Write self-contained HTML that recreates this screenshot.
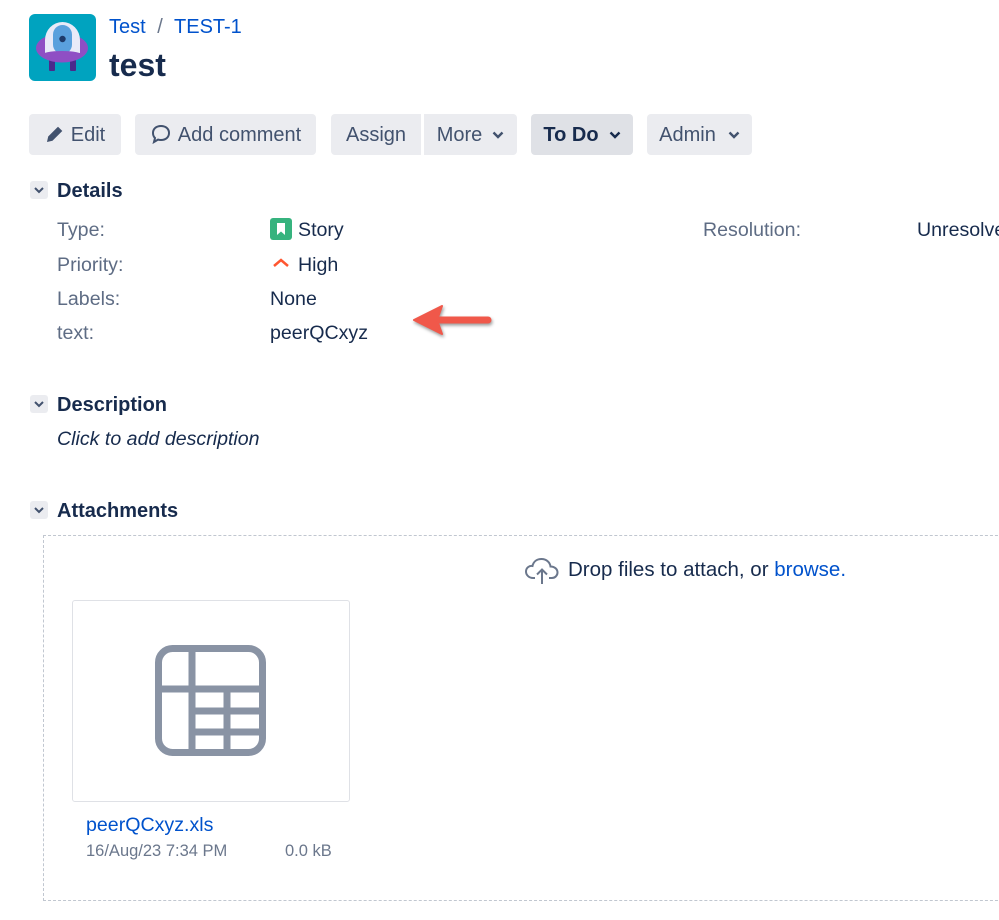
<!DOCTYPE html>
<html><head><meta charset="utf-8"><style>
*{margin:0;padding:0;box-sizing:border-box}
body{width:999px;height:920px;background:#fff;font-family:"Liberation Sans",sans-serif;color:#172b4d;position:relative;overflow:hidden}
.a{position:absolute;white-space:nowrap}
.btn{position:absolute;top:114px;height:41px;background:#ebecf0;border-radius:4px;font-size:20px;line-height:42px;color:#42526e;text-align:center}
.lbl{position:absolute;left:57px;font-size:19.6px;color:#5e6c84;line-height:22px}
.val{position:absolute;font-size:19.6px;color:#172b4d;line-height:22px}
.hd{position:absolute;left:30px;font-size:20px;font-weight:bold;line-height:22px}
.chev{position:absolute;left:30px;width:18px;height:18px;background:#ebecf0;border-radius:3px}
.dd{display:inline-block;vertical-align:2px;margin-left:10px}
</style></head><body>
<svg class="a" style="left:29px;top:14px" width="67" height="67" viewBox="0 0 67 67">
<rect width="67" height="67" rx="6" fill="#00a3bf"/>
<rect x="20" y="44" width="6" height="13" rx="1" fill="#4a2a8c"/><rect x="41" y="44" width="6" height="13" rx="1" fill="#4a2a8c"/>
<ellipse cx="33" cy="34" rx="26" ry="14.5" fill="#8f4fc4"/>
<path d="M16 39 L16 26 A17.5 18 0 0 1 51 26 L51 39 Z" fill="#e8eaf8"/>
<rect x="24" y="11" width="19" height="29" rx="9.5" fill="#5aa0dd"/>
<circle cx="33.5" cy="25" r="3.2" fill="#1e3a6a"/>
<ellipse cx="33" cy="41" rx="20" ry="4" fill="#8f4fc4"/>
</svg>
<div class="a" style="left:109px;top:16px;font-size:20px;color:#0052cc">Test <span style="color:#6b778c;margin:0 6px">/</span> TEST-1</div>
<div class="a" style="left:109px;top:47px;font-size:32px;font-weight:bold;color:#172b4d">test</div>

<div class="btn" style="left:29px;width:92px"><svg width="20" height="20" viewBox="0 0 20 20" style="vertical-align:-3px;margin-right:6px"><path d="M2 18 L3.2 12.5 L13 2.7 L17.3 7 L7.5 16.8 Z" fill="#42526e"/></svg>Edit</div>
<div class="btn" style="left:135px;width:181px"><svg width="22" height="20" viewBox="0 0 22 20" style="vertical-align:-3px;margin-right:6px"><path d="M11 2 C16 2 19 5 19 9 C19 13 16 16 11 16 C10 16 9 16 8 15.6 L4 18 L5 14 C3.5 12.6 3 11 3 9 C3 5 6 2 11 2 Z" fill="none" stroke="#42526e" stroke-width="2"/></svg>Add comment</div>
<div class="btn" style="left:331px;width:90px;border-radius:4px 0 0 4px">Assign</div>
<div class="btn" style="left:424px;width:93px;border-radius:0 4px 4px 0">More<svg class="dd" width="12" height="8"><path d="M1.5 1.5 L6 6 L10.5 1.5" stroke="#42526e" stroke-width="2.4" fill="none"/></svg></div>
<div class="btn" style="left:531px;width:102px;background:#dfe1e6;color:#172b4d;font-weight:bold">To Do<svg class="dd" width="12" height="8"><path d="M1.5 1.5 L6 6 L10.5 1.5" stroke="#172b4d" stroke-width="2.4" fill="none"/></svg></div>
<div class="btn" style="left:647px;width:105px">Admin<svg class="dd" width="12" height="8" style="margin-left:12px"><path d="M1.5 1.5 L6 6 L10.5 1.5" stroke="#42526e" stroke-width="2.4" fill="none"/></svg></div>

<div class="chev" style="top:181px"><svg width="18" height="18"><path d="M5 7 L9 11 L13 7" stroke="#42526e" stroke-width="2" fill="none"/></svg></div>
<div class="hd" style="left:57px;top:180px">Details</div>
<div class="lbl" style="top:219px">Type:</div>
<div class="lbl" style="top:254px">Priority:</div>
<div class="lbl" style="top:288px">Labels:</div>
<div class="lbl" style="top:322px">text:</div>
<svg class="a" style="left:270px;top:218px" width="22" height="22"><rect width="22" height="22" rx="3" fill="#36b37e"/><path d="M7 5 H15 V17 L11 13.5 L7 17 Z" fill="#fff"/></svg>
<div class="val" style="left:298px;top:219px">Story</div>
<svg class="a" style="left:271px;top:255px" width="20" height="16"><path d="M3 11 L10 5 L17 11" stroke="#ff5630" stroke-width="2.5" fill="none"/></svg>
<div class="val" style="left:298px;top:254px">High</div>
<div class="val" style="left:270px;top:288px">None</div>
<div class="val" style="left:270px;top:322px">peerQCxyz</div>
<div class="lbl" style="left:703px;top:219px">Resolution:</div>
<div class="val" style="left:917px;top:219px">Unresolved</div>
<svg class="a" style="left:408px;top:300px" width="92" height="42"><g filter="drop-shadow(1px 2px 1.5px rgba(0,0,0,.4))"><path d="M80 20 H32" stroke="#f0584a" stroke-width="7" stroke-linecap="round"/><path d="M6 20 L34 6 L29 20 L34 34 Z" fill="#f0584a" stroke="#f0584a" stroke-width="2" stroke-linejoin="round"/></g></svg>

<div class="chev" style="top:395px"><svg width="18" height="18"><path d="M5 7 L9 11 L13 7" stroke="#42526e" stroke-width="2" fill="none"/></svg></div>
<div class="hd" style="left:57px;top:394px">Description</div>
<div class="val" style="left:57px;top:428px;font-style:italic">Click to add description</div>

<div class="chev" style="top:501px"><svg width="18" height="18"><path d="M5 7 L9 11 L13 7" stroke="#42526e" stroke-width="2" fill="none"/></svg></div>
<div class="hd" style="left:57px;top:500px">Attachments</div>
<div class="a" style="left:43px;top:535px;width:980px;height:366px;border:1.5px dashed #c1c7d0"></div>
<svg class="a" style="left:524px;top:556px" width="36" height="30" viewBox="0 0 36 30"><path d="M11 22 H9 C5 22 2 19 2 15.5 C2 12 5 9.5 8.5 10 C9.5 5.5 13 3 17.5 3 C22.5 3 26 6.5 26.5 10.5 C30.5 10.5 33.5 13 33.5 16.5 C33.5 19.5 31 22 28 22 H25" fill="none" stroke="#6b778c" stroke-width="2"/><path d="M18 28 V14 M13 18.5 L18 13.5 L23 18.5" fill="none" stroke="#6b778c" stroke-width="2"/></svg>
<div class="val" style="left:568px;top:559px;font-size:20.5px">Drop files to attach, or <span style="color:#0052cc">browse.</span></div>
<div class="a" style="left:72px;top:600px;width:278px;height:202px;border:1px solid #dfe1e6;border-radius:3px"></div>
<svg class="a" style="left:155px;top:645px" width="112" height="112" viewBox="0 0 112 112"><g fill="none" stroke="#8993a4" stroke-width="7"><rect x="3.5" y="3.5" width="104" height="104" rx="14"/><path d="M37 4 V108 M4 44 H108 M72 44 V108 M37 66 H108 M37 87 H108"/></g></svg>
<div class="a" style="left:86px;top:814px;font-size:19.6px;color:#0052cc">peerQCxyz.xls</div>
<div class="a" style="left:86px;top:842px;font-size:16.5px;color:#6b778c">16/Aug/23 7:34 PM</div>
<div class="a" style="left:285px;top:842px;font-size:16.5px;color:#6b778c">0.0 kB</div>
</body></html>
